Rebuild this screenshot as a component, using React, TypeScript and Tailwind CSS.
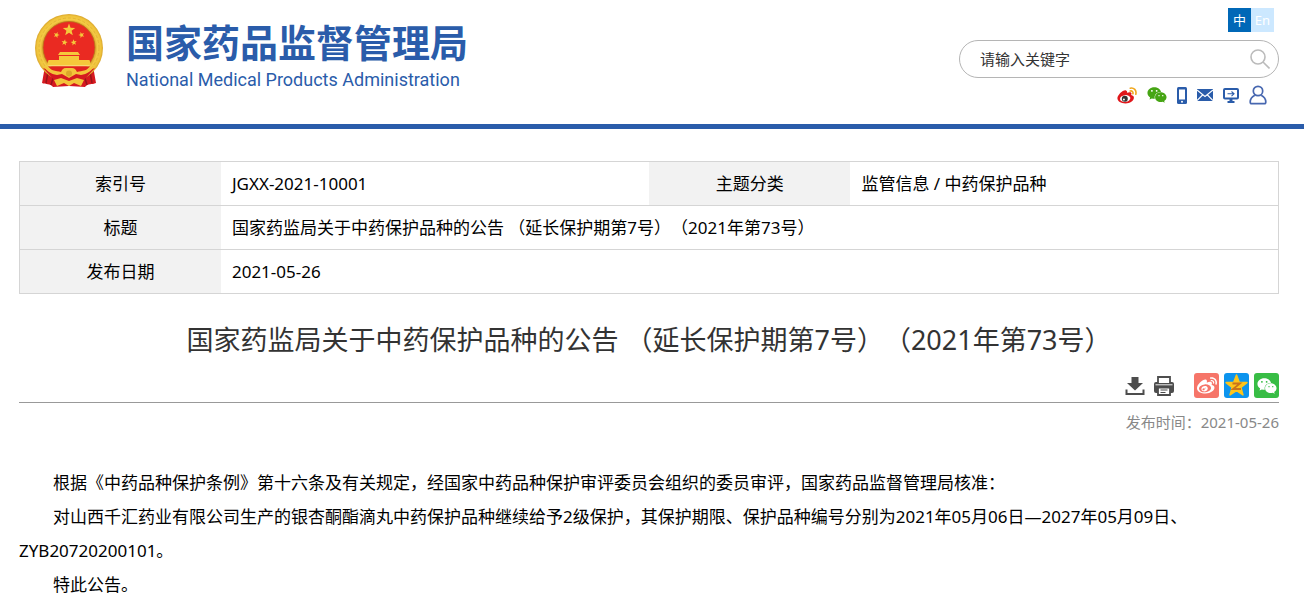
import { FaWeibo, FaWeixin } from "react-icons/fa";

const star = (cx: number, cy: number, r: number, turn = -90) =>
  Array.from({ length: 10 }, (_, i) => {
    const radius = i % 2 === 0 ? r : r * 0.42;
    const a = ((turn + i * 36) * Math.PI) / 180;
    return `${(cx + radius * Math.cos(a)).toFixed(2)},${(cy + radius * Math.sin(a)).toFixed(2)}`;
  }).join(" ");

const Emblem = () => (
  <svg viewBox="0 0 68 74" className="h-[74px] w-[68px]" aria-hidden="true">
    <defs>
      <radialGradient id="gold" cx="50%" cy="50%" r="50%">
        <stop offset="0.76" stopColor="#d9a02a" />
        <stop offset="0.84" stopColor="#f3cb45" />
        <stop offset="0.94" stopColor="#f0c43c" />
        <stop offset="1" stopColor="#d9a52c" />
      </radialGradient>
    </defs>
    <path d="M10 52 7 69c4 2 8 0 11 4l16-1 16 1c3-4 7-2 11-4l-3-17z" fill="#d51920" />
    <path d="M13 58 11 69M19 61l-3 10M55 58l2 11M49 61l3 10" stroke="#98151a" strokeWidth="1.5" />
    <circle cx="34" cy="34" r="34" fill="url(#gold)" />
    <circle cx="34" cy="34" r="30" fill="none" stroke="#dfae33" strokeWidth="0.8" strokeDasharray="3 2" />
    <circle cx="34" cy="33.5" r="26" fill="#ea2a22" stroke="#b8741a" strokeWidth="0.8" />
    <g fill="#f5c93b">
      <polygon points={star(34, 16, 6.5)} />
      <polygon points={star(21.5, 21, 3.2, -70)} />
      <polygon points={star(46.5, 21, 3.2, -110)} />
      <polygon points={star(29.5, 28.5, 3.2, -80)} />
      <polygon points={star(38.8, 28.5, 3.2, -100)} />
      <path d="M25 38h18l2 3H23zM24 42h20v4H24zM13.5 46h41l1.500 5H12z" />
      <path d="M12 51h44l-3 1.500H15z" fill="#f9d970" />
    </g>
    <path d="M13 52.500h42l-7 6.500H20z" fill="#e0231f" />
    <path d="M8 54c8 3 14 4 18 6h16c4-2 10-3 18-6L47 68H21z" fill="#d51920" />
    <path d="M9 52c6 4 12 5 17 6 2-5 5-4 8-4s6-1 8 4c5-1 11-2 17-6-2 5-7 8-13 9l-5-1-7 4-7-4-5 1c-6-1-11-4-13-9z" fill="#f3c43a" />
    <path d="m19 66 7-2 8 3 8-3 7 2-3 6-7-3-5 3-5-3-7 3z" fill="#f3c43a" />
    <circle cx="34" cy="59.500" r="3" fill="#dca62a" />
  </svg>
);

const WeiboColor = () => (
  <svg viewBox="0 0 20 17" className="h-[17px] w-5" aria-hidden="true">
    <path
      d="M9 3.4c1.3.3 1.2 1.5.9 2.4 2-.8 4.7-1 4.600.8 0 .5-.2 1-.4 1.400 1.900.4 2.900 1.400 2.800 2.800C16.700 14 13 16.400 8.500 16.400 3.900 16.400.4 14.300.4 11.300.4 8.100 6 2.600 9 3.400z"
      fill="#e0171b"
    />
    <ellipse cx="8.200" cy="11.500" rx="5.200" ry="3.400" fill="#fff" transform="rotate(-7 8.200 11.500)" />
    <circle cx="7.800" cy="11.700" r="3" fill="#333" />
    <circle cx="6.900" cy="12.400" r="1" fill="#fff" />
    <path d="M13.200 1.200c3.700-.8 6.600 2 5.600 6M13.200 4c1.900-.4 3.200.9 2.700 2.700" fill="none" stroke="#f0a71d" strokeWidth="1.600" strokeLinecap="round" />
  </svg>
);

const PhoneIcon = () => (
  <svg viewBox="0 0 10 17" className="h-[17px] w-[10px]" aria-hidden="true">
    <rect width="10" height="17" rx="1.500" fill="#2a5caa" />
    <path d="M2 2.500h6v10H2z" fill="#fff" />
    <circle cx="5" cy="14.800" r="1" fill="#fff" />
  </svg>
);

const MailIcon = () => (
  <svg viewBox="0 0 16 12" className="h-3 w-4" aria-hidden="true">
    <path d="M0 0h16v12H0z" fill="#2a5caa" />
    <path d="m0 1 8 6.500L16 1M0 11.500l5.500-5.500M16 11.500l-5.500-5.500" fill="none" stroke="#fff" strokeWidth="1.100" />
  </svg>
);

const ScreenIcon = () => (
  <svg viewBox="0 0 16 15" className="h-[15px] w-4" fill="none" stroke="#2a5caa" aria-hidden="true">
    <rect x="1" y="1" width="14" height="9.500" rx="1" strokeWidth="2" />
    <path d="M4.500 5.800h6.500M8.500 3.500l2.500 2.300-2.500 2.300" strokeWidth="1.100" />
    <path d="M8 11v3" strokeWidth="3" />
    <path d="M4.500 14h7" strokeWidth="2" />
  </svg>
);

const UserIcon = () => (
  <svg viewBox="0 0 18 20" className="h-5 w-[18px]" fill="none" stroke="#4767b0" strokeWidth="1.700" aria-hidden="true">
    <circle cx="9" cy="6" r="4.700" />
    <path d="M5.800 10.200C3 11.700 1.200 14 1.200 17c0 1.200.6 1.700 1.600 1.700h12.400c1 0 1.600-.5 1.600-1.700 0-3-1.800-5.300-4.600-6.800" />
  </svg>
);

const DownloadIcon = () => (
  <svg viewBox="0 0 20 20" className="size-5" fill="#4d4d4d" aria-hidden="true">
    <path d="M6.500 1h7v6H18l-8 7.500L2 7h4.500z" />
    <path d="M.5 13.500h2v3.500h15v-3.500h2V19H.5z" />
  </svg>
);

const PrintIcon = () => (
  <svg viewBox="0 0 20 20" className="size-5" aria-hidden="true">
    <rect y="6" width="20" height="11" rx="2" fill="#4d4d4d" />
    <path d="M4 7V1h12v6" fill="#fff" stroke="#4d4d4d" strokeWidth="1.800" />
    <path d="M1.500 8.800h17" stroke="#fff" strokeWidth="0.900" />
    <path d="M4 11.500h12V19H4z" fill="#fff" stroke="#4d4d4d" strokeWidth="1.800" />
    <path d="M6.500 14h7M6.500 16.500h5" stroke="#4d4d4d" strokeWidth="1.200" />
  </svg>
);

const QzoneIcon = () => (
  <svg viewBox="0 0 25 25" className="size-[25px]" aria-hidden="true">
    <polygon points={star(12.5, 13, 11)} fill="#fdc51b" stroke="#fdc51b" strokeWidth="1.500" strokeLinejoin="round" />
    <path d="M8.500 10.500h7.500l-7 5.500h8" fill="none" stroke="#c9731b" strokeWidth="1.800" />
  </svg>
);

const quickLinks = [
  { label: "微博", icon: <WeiboColor /> },
  { label: "微信", icon: <FaWeixin className="size-5 text-[#46a514]" /> },
  { label: "手机版", icon: <PhoneIcon /> },
  { label: "邮箱", icon: <MailIcon /> },
  { label: "客户端", icon: <ScreenIcon /> },
  { label: "个人中心", icon: <UserIcon /> },
];

const Header = () => (
  <header className="flex h-[129px] justify-between border-b-5 border-[#2a5caa] pr-[25px] pl-[35px]">
    <a href="#" className="flex gap-[23px] self-start pt-[14px] text-[#2a5caa]">
      <Emblem />
      <span className="pt-1">
        <span className="block text-[38px] leading-[48px] font-bold">国家药品监督管理局</span>
        <span className="block pt-[2px] font-[Roboto] text-[18px] leading-6">National Medical Products Administration</span>
      </span>
    </a>
    <div className="flex w-80 flex-col items-end pt-2">
      <nav className="mr-[5px] flex text-center text-[13px] leading-6 text-white">
        <a href="#" className="w-[23px] bg-[#0068b7]">中</a>
        <a href="#" className="w-[23px] bg-[#cce8ff]">En</a>
      </nav>
      <form className="mt-2 flex h-[38px] w-full items-center rounded-full border border-[#b5b5b5] pr-2 pl-5">
        <input
          type="text"
          aria-label="请输入关键字"
          placeholder="请输入关键字"
          className="min-w-0 flex-1 text-[15px] outline-none placeholder:text-[#333]"
        />
        <button type="button" aria-label="搜索">
          <svg viewBox="0 0 20 20" className="size-5" fill="none" stroke="#bbb" strokeWidth="1.600">
            <circle cx="8" cy="8" r="7" />
            <path d="m13 13 6.500 6.500" />
          </svg>
        </button>
      </form>
      <nav className="mt-[7px] mr-3 flex h-5 items-center gap-[10px]">
        {quickLinks.map((link) => (
          <a key={link.label} href="#" aria-label={link.label}>
            {link.icon}
          </a>
        ))}
      </nav>
    </div>
  </header>
);

const labelCell = "w-[16%] bg-[#f2f2f2] font-normal";
const valueCell = "pl-[11px]";

const InfoTable = () => (
  <table className="w-full table-fixed border-collapse border border-[#d5d5d5] text-[17px] leading-6 text-black">
    <tbody>
      <tr className="h-11 border-b border-[#d5d5d5]">
        <th scope="row" className={labelCell}>索引号</th>
        <td className={valueCell}>JGXX-2021-10001</td>
        <th scope="row" className={labelCell}>主题分类</th>
        <td className={valueCell}>监管信息 / 中药保护品种</td>
      </tr>
      <tr className="h-11 border-b border-[#d5d5d5]">
        <th scope="row" className={labelCell}>标题</th>
        <td colSpan={3} className={valueCell}>国家药监局关于中药保护品种的公告 （延长保护期第7号）（2021年第73号）</td>
      </tr>
      <tr className="h-11">
        <th scope="row" className={labelCell}>发布日期</th>
        <td colSpan={3} className={valueCell}>2021-05-26</td>
      </tr>
    </tbody>
  </table>
);

const Toolbar = () => (
  <div className="mt-[13px] flex items-center justify-end border-b border-[#999] pb-1">
    <button type="button" aria-label="下载"><DownloadIcon /></button>
    <button type="button" aria-label="打印" className="ml-[9px]"><PrintIcon /></button>
    <div className="ml-5 flex gap-[5px] text-white">
      <a href="#" aria-label="分享到微博" className="flex size-[25px] items-center justify-center rounded-[3px] bg-[#f67569]">
        <FaWeibo className="size-5" />
      </a>
      <a href="#" aria-label="分享到QQ空间" className="flex size-[25px] items-center justify-center rounded-[3px] bg-[#0c94ee]">
        <QzoneIcon />
      </a>
      <a href="#" aria-label="分享到微信" className="flex size-[25px] items-center justify-center rounded-[3px] bg-[#38bd45]">
        <FaWeixin className="size-5" />
      </a>
    </div>
  </div>
);

export default function App() {
  return (
    <div className="bg-white font-['Noto_Sans','Noto_Sans_CJK_SC',sans-serif] [text-spacing-trim:space-all]" lang="zh-CN">
      <Header />
      <main className="pt-8 pr-[25px] pl-[19px]">
        <InfoTable />
        <article>
          <h1 className="mt-[26px] text-center text-[27px] leading-10 text-[#333]">
            国家药监局关于中药保护品种的公告 （延长保护期第7号）（2021年第73号）
          </h1>
          <Toolbar />
          <p className="mt-[7px] text-right text-[15px] leading-6 text-[#888]">发布时间：2021-05-26</p>
          <div className="mt-8 text-[17px] leading-[34px] text-black">
            <p className="indent-[34px]">
              根据《中药品种保护条例》第十六条及有关规定，经国家中药品种保护审评委员会组织的委员审评，国家药品监督管理局核准：
            </p>
            <p className="indent-[34px]">
              对山西千汇药业有限公司生产的银杏酮酯滴丸中药保护品种继续给予2级保护，其保护期限、保护品种编号分别为2021年05月06日—2027年05月09日、ZYB20720200101。
            </p>
            <p className="indent-[34px]">特此公告。</p>
          </div>
        </article>
      </main>
    </div>
  );
}
